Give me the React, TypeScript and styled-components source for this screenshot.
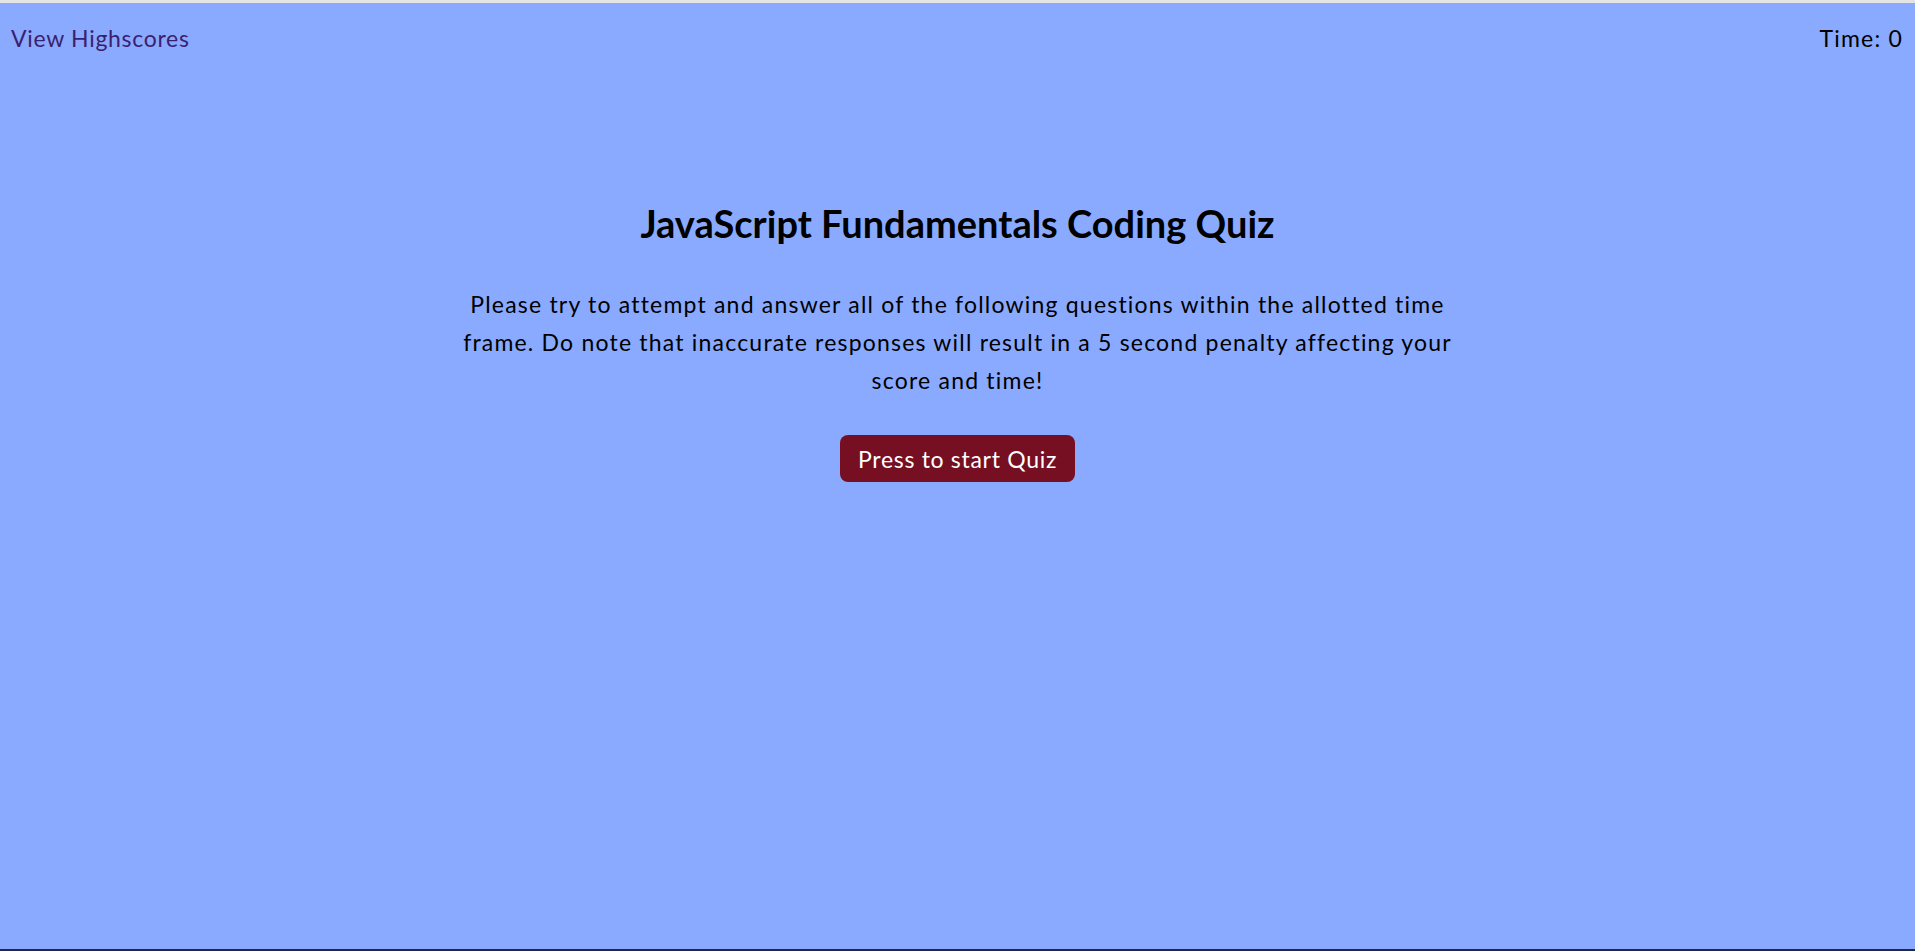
import React from "react";
import styled, { createGlobalStyle } from "styled-components";

const GlobalStyle = createGlobalStyle`
  html, body {
    margin: 0;
    padding: 0;
    background: #8aaaff;
  }
  * { box-sizing: border-box; }
`;

const Page = styled.div`
  min-height: 100vh;
  background: #8aaaff;
  border-top: 3px solid #e4e4e4;
  border-bottom: 2px solid #25244a;
  font-family: Lato, "Noto Sans", sans-serif;
  display: flex;
  flex-direction: column;
`;

const Header = styled.header`
  display: flex;
  justify-content: space-between;
  align-items: center;
  padding: 22px 12px 0 11px;
  font-size: 23px;
  line-height: 26px;
  letter-spacing: 0.7px;
`;

const HighscoreLink = styled.a`
  color: #3b1f6e;
  text-decoration: none;
  cursor: pointer;
`;

const Timer = styled.span`
  color: #000;
  letter-spacing: 1.2px;
`;

const Main = styled.main`
  display: flex;
  flex-direction: column;
  align-items: center;
  text-align: center;
  padding-top: 150px;
`;

const Title = styled.h1`
  margin: 0;
  font-size: 38px;
  line-height: 44px;
  font-weight: 700;
  color: #000;
`;

const Intro = styled.p`
  margin: 40px 0 0;
  max-width: 1000px;
  font-size: 23px;
  line-height: 38px;
  letter-spacing: 1.2px;
  color: #000;
`;

const StartButton = styled.button`
  margin-top: 36px;
  background: #760f22;
  color: #fff;
  border: none;
  border-radius: 8px;
  font-family: inherit;
  font-size: 23px;
  letter-spacing: 0.7px;
  padding: 0 18px;
  height: 47px;
  cursor: pointer;
`;

export default function App() {
  return (
    <>
      <GlobalStyle />
      <Page>
        <Header>
          <HighscoreLink>View Highscores</HighscoreLink>
          <Timer>Time: 0</Timer>
        </Header>
        <Main>
          <Title>JavaScript Fundamentals Coding Quiz</Title>
          <Intro>
            Please try to attempt and answer all of the following questions within the allotted time
            frame. Do note that inaccurate responses will result in a 5 second penalty affecting your
            score and time!
          </Intro>
          <StartButton>Press to start Quiz</StartButton>
        </Main>
      </Page>
    </>
  );
}
